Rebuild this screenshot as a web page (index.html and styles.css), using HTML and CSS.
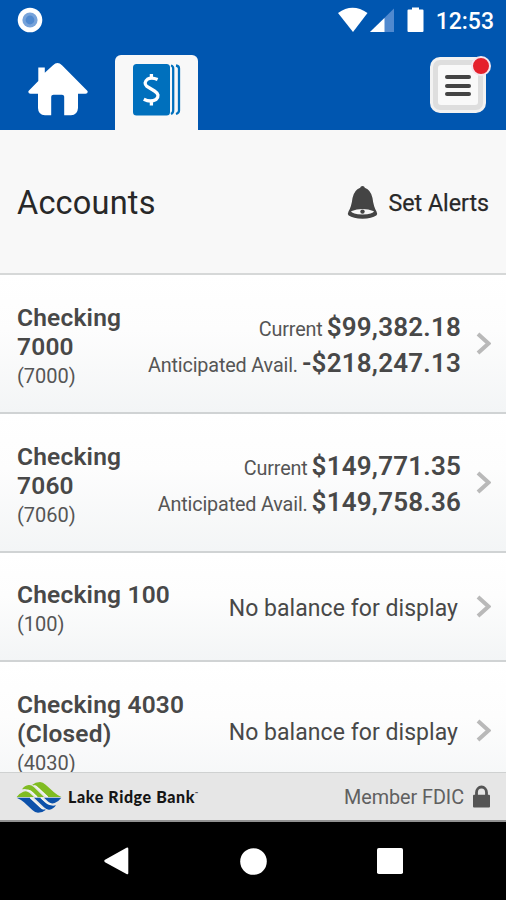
FILE: index.html
```html
<!DOCTYPE html>
<html lang="en">
<head>
<meta charset="utf-8">
<title>Accounts</title>
<link rel="stylesheet" href="styles.css">
</head>
<body>
<div class="screen">
  <div class="status">
    <svg class="ring" width="26" height="26" viewBox="0 0 26 26"><circle cx="13" cy="13" r="12.3" fill="#fff"/><circle cx="13" cy="13" r="7.6" fill="#77a3da"/><circle cx="13" cy="13" r="4.4" fill="#5089cf"/></svg>
    <svg class="signals" width="88" height="26" viewBox="0 0 88 26">
      <path d="M0 6Q14.5-4.500 29.500 6L15 25z" fill="#fff"/>
      <path d="M56 1.500V25H32z" fill="#5089cf"/><path d="M46.500 11V25H32z" fill="#fff"/>
      <path d="M74 .5h7v2h3.500q1 0 1 1V24q0 1-1 1H70.500q-1 0-1-1V3.500q0-1 1-1H74z" fill="#fff"/>
    </svg>
    <span class="time">12:53</span>
  </div>
  <nav class="nav">
    <svg class="home" width="60" height="53" viewBox="0 0 60 53"><path d="M10.300 4.500h6.500v5.200L25 2.200q4.500-4.400 9 0L59.500 28q.8 2.700-2 2.700H50V45q-.5 7-7 7.300h-6.800V33.500Q36 31.800 34 31.800H25.500q-2.300 0-2.300 2V52.300H17Q10.200 52 10 45V30.700H2.500Q-.2 30.500.5 28L10.300 18z" fill="#fff"/></svg>
    <div class="tab">
      <svg width="48" height="52" viewBox="0 0 48 52"><rect x="0" y="0" width="37" height="51.500" rx="3.500" fill="#0070bd"/>
        <g fill="none" stroke="#0070bd" stroke-width="2.300"><path d="M38 1.500q2.200.5 2.200 3v42q0 2.500-2.200 3.500M43 1.500q3 .5 3 3v42q0 2.500-3 3.500"/></g>
        <path d="M24.600 15.500Q18.500 12.800 14.500 15.200Q10 18.700 14 22.500L21.500 27Q27.700 31 23 35.500Q17.500 38.600 10.800 35.200M18.400 10v4.500M18.400 36.500v5" fill="none" stroke="#fff" stroke-width="3.300"/></svg>
    </div>
    <div class="menu">
      <div class="menu-face"><i></i><i></i><i></i></div>
      <b class="dot"></b>
    </div>
  </nav>
  <header class="heading">
    <h1>Accounts</h1>
    <div class="alerts">
      <svg width="31" height="33" viewBox="0 0 31 33"><path d="M15.500 0q2 0 2.300 1.700Q24 4 25.500 12q1 8.500 4 13.500 1.400 2.500-.2 4Q25 32.500 15.500 32.700 6 32.500 1.700 29.500q-1.600-1.500-.2-4Q4.500 20.500 5.500 12 7 4 13.200 1.700 13.500 0 15.500 0z" fill="#444"/><path d="M4 25.300Q15.500 20.700 27 25.300 26 28.300 15.500 28.500 5 28.300 4 25.300z" fill="#f7f7f7"/><circle cx="15.500" cy="25.600" r="2.200" fill="#444"/></svg>
      <span>Set Alerts</span>
    </div>
  </header>
  <main class="list">
    <section class="row">
      <div class="name"><h2>Checking<br>7000</h2><small>(7000)</small></div>
      <div class="balances"><p><span>Current</span><strong>$99,382.18</strong></p><p><span>Anticipated Avail.</span><strong>-$218,247.13</strong></p></div>
      <svg class="chevron" width="16" height="24" viewBox="0 0 16 24"><path d="M3 2l10.500 9.500L3 21" /></svg>
    </section>
    <section class="row">
      <div class="name"><h2>Checking<br>7060</h2><small>(7060)</small></div>
      <div class="balances"><p><span>Current</span><strong>$149,771.35</strong></p><p><span>Anticipated Avail.</span><strong>$149,758.36</strong></p></div>
      <svg class="chevron" width="16" height="24" viewBox="0 0 16 24"><path d="M3 2l10.500 9.500L3 21" /></svg>
    </section>
    <section class="row short">
      <div class="name"><h2>Checking 100</h2><small>(100)</small></div>
      <div class="empty">No balance for display</div>
      <svg class="chevron" width="16" height="24" viewBox="0 0 16 24"><path d="M3 2l10.500 9.500L3 21" /></svg>
    </section>
    <section class="row">
      <div class="name"><h2>Checking 4030<br>(Closed)</h2><small>(4030)</small></div>
      <div class="empty">No balance for display</div>
      <svg class="chevron" width="16" height="24" viewBox="0 0 16 24"><path d="M3 2l10.500 9.500L3 21" /></svg>
    </section>
  </main>
  <footer class="footer">
    <svg width="46" height="32" viewBox="49 363 138 96">
      <defs><g id="waves"><path d="M51 411Q60 399 71 395Q81 391 90 399L103 411Z"/><path d="M67 388Q75 376 87 375Q95 374 103 382L133 411H114L96 395Q84 384 67 388z"/><path d="M97 375Q107 366 121 366Q130 366 138 374L163 397Q173 406 185 411H145L112 381Q106 375 97 375z"/></g></defs>
      <use href="#waves" fill="#80bc22"/>
      <use href="#waves" fill="#0c51aa" transform="rotate(180 118 412)"/>
      <path d="M82 392Q90 390 97 397L112 411M104 377Q109 378 114 383L144 411M154 432Q146 434 139 427L124 413M132 447Q127 446 122 441L92 413" fill="none" stroke="#f4f6f2" stroke-width="4"/>
    </svg>
    <span class="brand">Lake Ridge Bank<sup>™</sup></span>
    <span class="member">Member FDIC</span>
    <svg class="lock" width="17" height="23" viewBox="0 0 17 23"><path d="M3.500 11V7.500a5 5.500 0 0 1 10 0V11" fill="none" stroke="#555" stroke-width="2.800"/><rect y="9.800" width="17" height="12.700" rx="1" fill="#555"/></svg>
  </footer>
  <div class="system">
    <svg width="25" height="28" viewBox="0 0 25 28"><path d="M1 12.800L22.500.8q1.800-.8 1.800 1V26q0 2-1.800 1L1 15.200q-1.500-1.200 0-2.400z" fill="#fff"/></svg>
    <svg width="27" height="27" viewBox="0 0 27 27"><circle cx="13.500" cy="13.500" r="13.300" fill="#fff"/></svg>
    <svg width="26" height="26" viewBox="0 0 26 26"><rect width="26" height="26" rx="1.800" fill="#fff"/></svg>
  </div>
</div>
</body>
</html>
```
FILE: styles.css
```css
* { box-sizing: border-box; }
body { margin: 0; font-family: Roboto, "Liberation Sans", sans-serif; color: #484848; }
h1, h2, p { margin: 0; }
svg { display: block; flex: none; }
.screen { width: 506px; height: 900px; display: flex; flex-direction: column; overflow: hidden; background: #000; }
.status { height: 40px; flex: none; background: #0056b0; display: flex; align-items: flex-start; padding: 7px 12px 0 17px; color: #fff; }
.signals { margin-left: 295px; }
.time { margin-left: auto; font-size: 23px; line-height: 29px; font-weight: 500; }
.nav { height: 90px; flex: none; background: #0056b0; display: flex; align-items: flex-start; padding: 15px 20px 0 28px; }
.home { margin-top: 8px; }
.tab { width: 83px; height: 75px; margin-left: 27px; padding: 9px 0 0 18px; background: #f8f8f8; border-radius: 6px 6px 0 0; }
.menu { position: relative; width: 56px; height: 56px; margin: 2px 0 0 auto; padding: 5px; border-radius: 10px; background: #dedede; border: 3px solid #f2f2f2; }
.menu-face { height: 40px; background: #f9f9f9; border-radius: 3px; display: flex; flex-direction: column; align-items: center; justify-content: center; gap: 4.600px; padding-top: 1px; }
.menu-face i { width: 26px; height: 4px; border-radius: 2px; background: #444; }
.dot { position: absolute; right: -8px; top: -4px; width: 20px; height: 20px; border-radius: 50%; background: #e5202b; border: 2px solid #f4e6ee; }
.heading { height: 145px; flex: none; background: #f8f8f8; border-bottom: 2px solid #d6d8d8; display: flex; align-items: center; justify-content: space-between; padding: 3px 17px 0; color: #282828; }
h1 { font-size: 32.500px; font-weight: 400; letter-spacing: .2px; }
.alerts { display: flex; align-items: center; gap: 11px; font-size: 23.200px; }
.alerts svg { margin-top: -2px; }
.alerts span { -webkit-text-stroke: .25px #282828; }
.list { flex: 1; min-height: 0; overflow: hidden; }
.row { height: 139px; display: flex; padding: 0 15px 0 17px; background: linear-gradient(#fff, #fdfdfd 40%, #f3f5f6); border-bottom: 2px solid #d0d3d4; align-items: center; }
.short { height: 109px; }
.name { flex: none; white-space: nowrap; padding-top: 6px; }
h2 { font-size: 24.500px; line-height: 29px; font-weight: 600; letter-spacing: .2px; }
small { display: block; font-size: 20px; line-height: 30px; }
.balances { margin-left: auto; text-align: right; white-space: nowrap; padding-top: 3px; }
.balances p { height: 36px; display: flex; align-items: baseline; justify-content: flex-end; font-size: 19.800px; line-height: 36px; }
.balances span, small { color: #555; }
.balances span { letter-spacing: -.15px; }
.balances strong { margin-left: 4px; font-size: 26px; font-weight: 600; letter-spacing: .2px; }
.empty { margin-left: auto; margin-right: 3px; font-size: 23px; letter-spacing: .05px; padding-top: 3px; white-space: nowrap; }
.chevron { margin-left: 14px; fill: none; stroke: #b9b9b9; stroke-width: 4; }
.footer { height: 50px; flex: none; background: #e6e6e6; border-top: 1px solid #cfd1d1; border-bottom: 2px solid #929292; display: flex; align-items: center; padding: 0 16px; }
.brand { margin-left: 6px; color: #151515; font-family: Lato, sans-serif; font-size: 16px; font-weight: 900; letter-spacing: .6px; white-space: nowrap; }
.brand sup { font-size: 4px; vertical-align: 8px; line-height: 0; }
.member { margin-left: auto; font-size: 19.800px; letter-spacing: -.05px; color: #606060; padding-top: 2px; }
.lock { margin-left: 9px; }
.system { height: 78px; flex: none; display: flex; align-items: center; justify-content: space-between; padding: 0 103px 0 104px; }
```
